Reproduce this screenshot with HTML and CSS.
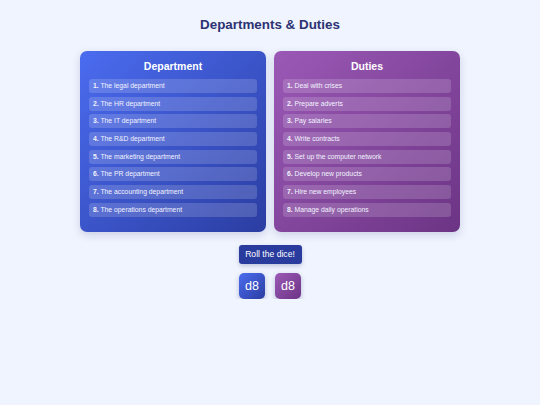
FILE: index.html
```html
<!DOCTYPE html>
<html lang="en">
<head>
    <meta charset="UTF-8">
    <meta name="viewport" content="width=device-width, initial-scale=1.0">
    <title>Departments &amp; Duties</title>
    <link rel="stylesheet" href="styles.css">
</head>
<body>
    <h1>Departments &amp; Duties</h1>

    <div class="columns">
        <div class="card dept">
            <h2>Department</h2>
            <ul>
                <li><b>1.</b> The legal department</li>
                <li><b>2.</b> The HR department</li>
                <li><b>3.</b> The IT department</li>
                <li><b>4.</b> The R&amp;D department</li>
                <li><b>5.</b> The marketing department</li>
                <li><b>6.</b> The PR department</li>
                <li><b>7.</b> The accounting department</li>
                <li><b>8.</b> The operations department</li>
            </ul>
        </div>
        <div class="card duty">
            <h2>Duties</h2>
            <ul>
                <li><b>1.</b> Deal with crises</li>
                <li><b>2.</b> Prepare adverts</li>
                <li><b>3.</b> Pay salaries</li>
                <li><b>4.</b> Write contracts</li>
                <li><b>5.</b> Set up the computer network</li>
                <li><b>6.</b> Develop new products</li>
                <li><b>7.</b> Hire new employees</li>
                <li><b>8.</b> Manage daily operations</li>
            </ul>
        </div>
    </div>

    <button class="roll">Roll the dice!</button>

    <div class="dice">
        <div class="die dept">d8</div>
        <div class="die duty">d8</div>
    </div>
</body>
</html>
```

FILE: styles.css
```css
body {
    margin: 0;
    background-color: #f0f4fe;
    font-family: "Liberation Sans", Arial, sans-serif;
    display: flex;
    flex-direction: column;
    align-items: center;
}
h1 {
    margin: 16px 0 0;
    font-size: 13.4px;
    line-height: 18px;
    color: #2c3272;
}
.columns {
    display: flex;
    gap: 8px;
    margin-top: 17px;
}
.card {
    width: 186px;
    box-sizing: border-box;
    padding: 7px 9px 15px;
    border-radius: 7px;
    color: white;
    box-shadow: 0 3px 8px rgba(40, 50, 120, 0.18);
}
.dept {
    background: linear-gradient(135deg, #4b6cf0, #2b3da2);
}
.duty {
    background: linear-gradient(135deg, #9b59b6, #6c3485);
}
h2 {
    margin: 0 0 5px;
    font-size: 10.5px;
    line-height: 16px;
    text-align: center;
}
ul {
    list-style: none;
    margin: 0;
    padding: 0;
    display: flex;
    flex-direction: column;
    gap: 3.7px;
}
li {
    height: 14px;
    line-height: 14px;
    padding: 0 4px;
    font-size: 6.8px;
    border-radius: 3px;
    background: rgba(255, 255, 255, 0.16);
    color: #f2f2ff;
}
.roll {
    margin-top: 13px;
    width: 63px;
    height: 19px;
    padding: 0;
    border: none;
    border-radius: 3px;
    background-color: #2a3b9e;
    color: white;
    font-family: inherit;
    font-size: 8.6px;
    box-shadow: 0 2px 4px rgba(40, 50, 120, 0.25);
}
.dice {
    display: flex;
    gap: 10px;
    margin-top: 9px;
}
.die {
    width: 26px;
    height: 26px;
    border-radius: 5px;
    display: flex;
    align-items: center;
    justify-content: center;
    color: white;
    font-size: 12.5px;
    box-shadow: 0 2px 5px rgba(40, 50, 120, 0.3);
}
```
